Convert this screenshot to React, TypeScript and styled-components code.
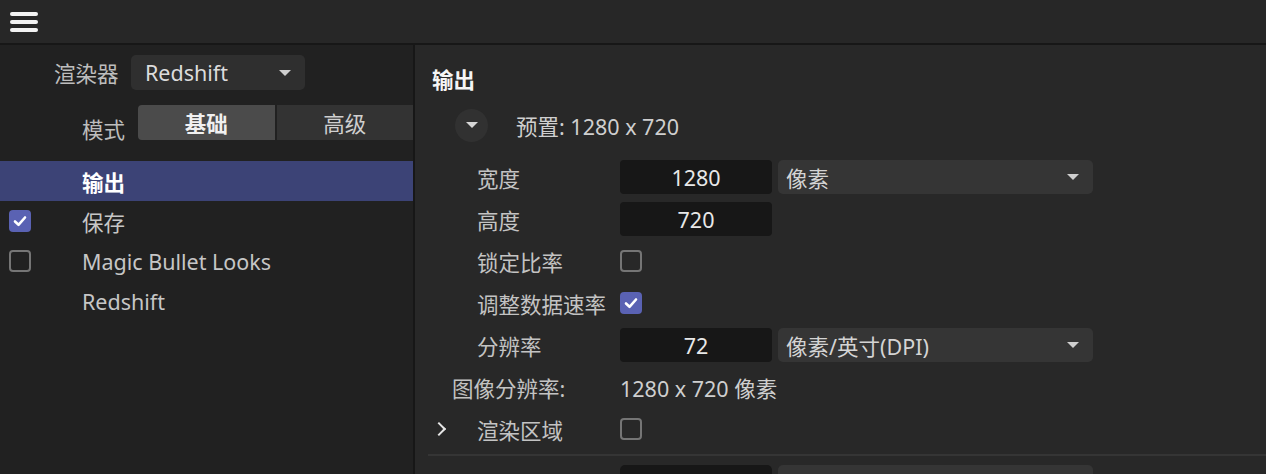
import React, { useState } from "react";
import styled, { createGlobalStyle } from "styled-components";

const GlobalStyle = createGlobalStyle`
  html, body {
    margin: 0;
    padding: 0;
    background: #282828;
    overflow: hidden;
  }
  body {
    font-family: "Noto Sans", "Noto Sans CJK SC", sans-serif;
    color: #c9c9c9;
  }
`;

const Page = styled.div`
  width: 1266px;
  height: 474px;
  display: flex;
  flex-direction: column;
  background: #282828;
  font-size: 21.5px;
  overflow: hidden;
`;

const TopBar = styled.div`
  height: 43px;
  flex-shrink: 0;
  display: flex;
  align-items: center;
  padding-left: 10px;
  background: #272727;
  border-bottom: 2px solid #171717;
`;

const Burger = styled.div`
  width: 28px;
  display: flex;
  flex-direction: column;
  gap: 4px;

  span {
    height: 4px;
    border-radius: 2px;
    background: #f2f2f2;
  }
`;

const Body = styled.div`
  flex: 1;
  display: flex;
  min-height: 0;
  overflow: hidden;
`;

const LeftPanel = styled.div`
  width: 413px;
  flex-shrink: 0;
  background: #212121;
  border-right: 2px solid #171717;
  padding-top: 10px;
`;

const TopRow = styled.div<{ $indent: number }>`
  display: flex;
  align-items: center;
  padding-left: ${(p) => p.$indent}px;
  height: 35px;
`;

const SideLabel = styled.span<{ $width: number; $drop?: number }>`
  width: ${(p) => p.$width}px;
  flex-shrink: 0;
  color: #bdbdbd;
  white-space: nowrap;
  transform: translateY(${(p) => p.$drop || 0}px);
`;

const RendererSelect = styled.div`
  width: 174px;
  height: 35px;
  box-sizing: border-box;
  padding: 0 14px;
  display: flex;
  align-items: center;
  justify-content: space-between;
  background: #2f2f2f;
  border-radius: 5px;
  color: #dcdcdc;
`;

const Caret = styled.span`
  width: 0;
  height: 0;
  border-left: 6px solid transparent;
  border-right: 6px solid transparent;
  border-top: 6px solid #cfcfcf;
`;

const Segmented = styled.div`
  flex: 1;
  display: flex;
  gap: 2px;
  height: 35px;
`;

const Segment = styled.button<{ $active?: boolean }>`
  flex: 1;
  border: none;
  margin: 0;
  padding: 0;
  font: inherit;
  color: ${(p) => (p.$active ? "#f0f0f0" : "#cfcfcf")};
  font-weight: ${(p) => (p.$active ? 600 : 400)};
  background: ${(p) => (p.$active ? "#4b4b4b" : "#333333")};
  border-radius: ${(p) => (p.$active ? "4px 0 0 4px" : "0")};
`;

const LayerList = styled.div`
  margin-top: 21px;
`;

const LayerRow = styled.div<{ $selected?: boolean }>`
  height: 40px;
  display: grid;
  grid-template-columns: 82px 1fr;
  align-items: center;
  background: ${(p) => (p.$selected ? "#3c4376" : "transparent")};
  color: ${(p) => (p.$selected ? "#ffffff" : "#c6c6c6")};
  font-weight: ${(p) => (p.$selected ? 600 : 400)};
`;

const CheckCell = styled.div`
  padding-left: 9px;
  display: flex;
  align-items: center;
`;

const Box = styled.span<{ $checked?: boolean }>`
  width: 22px;
  height: 22px;
  box-sizing: border-box;
  border-radius: 4px;
  display: inline-flex;
  align-items: center;
  justify-content: center;
  background: ${(p) => (p.$checked ? "#5a62b3" : "transparent")};
  border: ${(p) => (p.$checked ? "none" : "2px solid #757575")};
`;

const RightPanel = styled.div`
  flex: 1;
  background: #282828;
  padding-left: 17px;
  display: flex;
  flex-direction: column;
`;

const Heading = styled.div`
  margin-top: 20px;
  height: 30px;
  line-height: 30px;
  font-weight: 700;
  color: #f5f5f5;
`;

const PresetRow = styled.div`
  margin-top: 14px;
  display: flex;
  align-items: center;
  gap: 28px;
  padding-left: 23px;
  height: 32px;
  color: #cfcfcf;
`;

const RoundButton = styled.div`
  width: 33px;
  height: 33px;
  border-radius: 50%;
  background: #313131;
  display: flex;
  align-items: center;
  justify-content: center;
`;

const SmallCaret = styled.span`
  width: 0;
  height: 0;
  border-left: 6px solid transparent;
  border-right: 6px solid transparent;
  border-top: 6px solid #d6d6d6;
`;

const Form = styled.div`
  margin-top: 15px;
  display: grid;
  grid-template-columns: 182px 152px 315px;
  column-gap: 6px;
  grid-auto-rows: 42px;
  align-items: center;
`;

const FieldLabel = styled.div<{ $indent: number }>`
  padding-left: ${(p) => p.$indent}px;
  display: flex;
  align-items: center;
  color: #c3c3c3;
  white-space: nowrap;
  position: relative;
`;

const Chevron = styled.span`
  position: absolute;
  left: 2px;
  top: 50%;
  width: 8px;
  height: 8px;
  border-right: 2px solid #e6e6e6;
  border-top: 2px solid #e6e6e6;
  transform: translateY(-50%) rotate(45deg);
`;

const NumberInput = styled.div`
  height: 34px;
  border-radius: 4px;
  background: #171717;
  display: flex;
  align-items: center;
  justify-content: center;
  color: #e8e8e8;
`;

const UnitSelect = styled.div`
  height: 34px;
  box-sizing: border-box;
  border-radius: 5px;
  background: #353535;
  padding: 0 14px 0 8px;
  display: flex;
  align-items: center;
  justify-content: space-between;
  color: #d4d4d4;
`;

const Value = styled.div`
  grid-column: span 2;
  display: flex;
  align-items: center;
  color: #cfcfcf;
  white-space: nowrap;
`;

const Divider = styled.div`
  margin: 4px 0 0 -4px;
  height: 2px;
  flex-shrink: 0;
  background: #353535;
`;

const NextRow = styled.div`
  margin-top: 9px;
  display: grid;
  grid-template-columns: 182px 152px 315px;
  column-gap: 6px;
  flex-shrink: 0;
`;

const Ghost = styled.div<{ $dark?: boolean }>`
  height: 34px;
  border-radius: 5px;
  background: ${(p) => (p.$dark ? "#171717" : "#353535")};
`;

const Check = () => (
  <svg width="14" height="12" viewBox="0 0 14 12">
    <path d="M2 6.5 L5.5 9.8 L12 2.5" fill="none" stroke="#ffffff" strokeWidth="2.6" strokeLinecap="round" strokeLinejoin="round" />
  </svg>
);

export default function App() {
  const [mode, setMode] = useState("basic");
  const layers = [
    { name: "输出", box: "none", selected: true },
    { name: "保存", box: "on" },
    { name: "Magic Bullet Looks", box: "off" },
    { name: "Redshift", box: "none" },
  ];

  return (
    <Page>
      <GlobalStyle />
      <TopBar>
        <Burger>
          <span />
          <span />
          <span />
        </Burger>
      </TopBar>
      <Body>
        <LeftPanel>
          <TopRow $indent={54}>
            <SideLabel $width={77}>渲染器</SideLabel>
            <RendererSelect>
              Redshift
              <Caret />
            </RendererSelect>
          </TopRow>
          <TopRow $indent={82} style={{ marginTop: 15 }}>
            <SideLabel $width={56} $drop={6}>模式</SideLabel>
            <Segmented>
              <Segment $active={mode === "basic"} onClick={() => setMode("basic")}>基础</Segment>
              <Segment $active={mode === "adv"} onClick={() => setMode("adv")}>高级</Segment>
            </Segmented>
          </TopRow>
          <LayerList>
            {layers.map((l) => (
              <LayerRow key={l.name} $selected={l.selected}>
                <CheckCell>
                  {l.box === "on" && (
                    <Box $checked>
                      <Check />
                    </Box>
                  )}
                  {l.box === "off" && <Box />}
                </CheckCell>
                <span>{l.name}</span>
              </LayerRow>
            ))}
          </LayerList>
        </LeftPanel>
        <RightPanel>
          <Heading>输出</Heading>
          <PresetRow>
            <RoundButton>
              <SmallCaret />
            </RoundButton>
            <span>预置: 1280 x 720</span>
          </PresetRow>
          <Form>
            <FieldLabel $indent={45}>宽度</FieldLabel>
            <NumberInput>1280</NumberInput>
            <UnitSelect>
              像素
              <Caret />
            </UnitSelect>

            <FieldLabel $indent={45}>高度</FieldLabel>
            <NumberInput>720</NumberInput>
            <span />

            <FieldLabel $indent={45}>锁定比率</FieldLabel>
            <Value>
              <Box />
            </Value>

            <FieldLabel $indent={45}>调整数据速率</FieldLabel>
            <Value>
              <Box $checked>
                <Check />
              </Box>
            </Value>

            <FieldLabel $indent={45}>分辨率</FieldLabel>
            <NumberInput>72</NumberInput>
            <UnitSelect>
              像素/英寸(DPI)
              <Caret />
            </UnitSelect>

            <FieldLabel $indent={20}>图像分辨率:</FieldLabel>
            <Value>1280 x 720 像素</Value>

            <FieldLabel $indent={45}>
              <Chevron />
              渲染区域
            </FieldLabel>
            <Value>
              <Box />
            </Value>
          </Form>
          <Divider />
          <NextRow>
            <span />
            <Ghost $dark />
            <Ghost />
          </NextRow>
        </RightPanel>
      </Body>
    </Page>
  );
}
